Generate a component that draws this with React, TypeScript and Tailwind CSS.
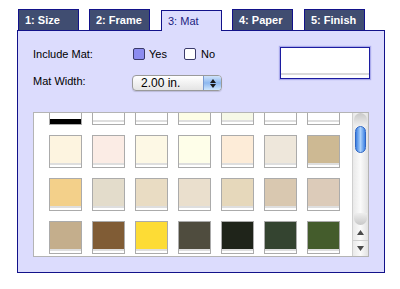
import React from "react";

const tabs = [
  { label: "1: Size", cls: "ml-[18px]", active: false },
  { label: "2: Frame", cls: "ml-[10px]", active: false },
  { label: "3: Mat", cls: "ml-[11px]", active: true },
  { label: "4: Paper", cls: "ml-[10px]", active: false },
  { label: "5: Finish", cls: "ml-[11px]", active: false },
];

// each row of mat swatches: [fill, strip]
const rows: string[][] = [
  ["#ffffff", "#ffffff", "#ffffff", "#fdfde6", "#f6f8e7", "#ffffff", "#ffffff"],
  ["#fdf4e0", "#fbece5", "#fdf8e5", "#fefee9", "#fdecd8", "#eee7db", "#cdb993"],
  ["#f3d08a", "#e3dccb", "#e9dcc3", "#eadfcd", "#e6d8bb", "#d9c8b0", "#dccbb9"],
  ["#c4ae8c", "#805c35", "#fddc35", "#4f4c3e", "#1f241a", "#344430", "#445c2c"],
];

function Swatch({ color, black }: { color: string; black?: boolean }) {
  return (
    <div className="w-[33px] h-[33px] border border-[#ababab] flex flex-col">
      <div className="flex-1" style={{ backgroundColor: color }} />
      {black ? (
        <div className="h-[5px] bg-black" />
      ) : (
        <>
          <div className="h-[2px] bg-[#dedede]" />
          <div className="h-[2px] bg-white" />
        </>
      )}
    </div>
  );
}

function Checkbox({ checked }: { checked?: boolean }) {
  return (
    <div
      className={`w-[12px] h-[12px] rounded-[2px] border border-[#3a3a6a] ${
        checked ? "bg-[#8c8cf0]" : "bg-white"
      }`}
    />
  );
}

export default function App() {
  return (
    <div className="w-[400px] h-[289px] bg-white font-['Liberation_Sans',Arial,sans-serif] text-[11px] text-black">
      {/* Tabs */}
      <div className="flex items-end h-[30px]">
        {tabs.map((t) =>
          t.active ? (
            <div
              key={t.label}
              className={`${t.cls} relative z-10 -mb-px w-[61px] h-[21px] border border-b-0 border-[#12128a] bg-[#dcdcfd] text-[#1c1c80] pl-[6px] pt-[3px] leading-[14px]`}
            >
              {t.label}
            </div>
          ) : (
            <div
              key={t.label}
              className={`${t.cls} w-[61px] h-[21px] border border-b-0 border-[#12128a] bg-[#404d71] text-white font-bold pl-[6px] pt-[3px] leading-[14px]`}
            >
              {t.label}
            </div>
          )
        )}
      </div>

      {/* Panel */}
      <div className="ml-[17px] w-[368px] h-[243px] border border-[#12128a] bg-[#dcdcfd]">
        <div className="flex pl-[15px] pt-[16px]">
          <div className="w-[247px]">
            <div className="flex items-center h-[14px]">
              <div className="w-[100px]">Include Mat:</div>
              <Checkbox checked />
              <span className="ml-[4px] w-[35px]">Yes</span>
              <Checkbox />
              <span className="ml-[5px]">No</span>
            </div>
            <div className="flex items-center h-[16px] mt-[14px]">
              <div className="w-[99px] -mt-[4px]">Mat Width:</div>
              <div className="w-[90px] h-[16px] rounded-[4px] border border-[#9a9a9a] bg-gradient-to-b from-white to-[#e4e4e4] flex overflow-hidden shadow-[0_1px_1px_rgba(0,0,0,0.15)]">
                <span className="flex-1 pl-[8px] leading-[15px] text-[12px]">2.00 in.</span>
                <div className="w-[18px] border-l border-[#7a9ad0] bg-gradient-to-b from-[#cfe3fb] via-[#8db8ef] to-[#cfe6fd] flex flex-col items-center justify-center gap-[1px]">
                  <svg width="6" height="4" viewBox="0 0 6 4">
                    <path d="M3 0 L6 4 L0 4 Z" fill="#1a1a1a" />
                  </svg>
                  <svg width="6" height="4" viewBox="0 0 6 4">
                    <path d="M0 0 L6 0 L3 4 Z" fill="#1a1a1a" />
                  </svg>
                </div>
              </div>
            </div>
          </div>
          <div className="w-[90px] h-[32px] border border-[#1c1ca0] bg-white flex flex-col shadow-[0_0_1px_1px_rgba(120,120,220,0.5)]">
            <div className="flex-1" />
            <div className="h-[2px] bg-[#dadada]" />
            <div className="h-[3px]" />
          </div>
        </div>

        {/* Swatch list */}
        <div className="ml-[15px] mt-[21px] w-[336px] h-[145px] border border-[#b4b4b4] bg-white flex">
          <div className="flex-1 overflow-hidden">
            <div className="-mt-[21px] pl-[15px] grid grid-cols-[repeat(7,33px)] gap-x-[10px] gap-y-[10px]">
              {rows.map((r, ri) =>
                r.map((c, ci) => (
                  <Swatch key={`${ri}-${ci}`} color={c} black={ri === 0 && ci === 0} />
                ))
              )}
            </div>
          </div>
          <div className="w-[16px] border-l border-[#cfcfcf] bg-gradient-to-r from-[#e9e9e9] via-[#fafafa] to-[#e2e2e2] flex flex-col">
            <div className="h-[13px] mx-[1px] rounded-t-full bg-gradient-to-b from-[#c8c8c8] to-[#eeeeee]" />
            <div className="mx-[2px] h-[27px] rounded-full border border-[#2f66c4] bg-gradient-to-r from-[#3b7fe0] via-[#a9d0fb] to-[#3e82e2]" />
            <div className="flex-1" />
            <div className="h-[12px] mx-[1px] rounded-b-full bg-gradient-to-b from-[#eeeeee] to-[#c8c8c8]" />
            <div className="h-[16px] flex items-center justify-center border-b border-[#cfcfcf]">
              <svg width="7" height="5" viewBox="0 0 7 5">
                <path d="M3.5 0 L7 5 L0 5 Z" fill="#4a4a4a" />
              </svg>
            </div>
            <div className="h-[15px] flex items-center justify-center">
              <svg width="7" height="5" viewBox="0 0 7 5">
                <path d="M0 0 L7 0 L3.5 5 Z" fill="#4a4a4a" />
              </svg>
            </div>
          </div>
        </div>
      </div>
    </div>
  );
}
